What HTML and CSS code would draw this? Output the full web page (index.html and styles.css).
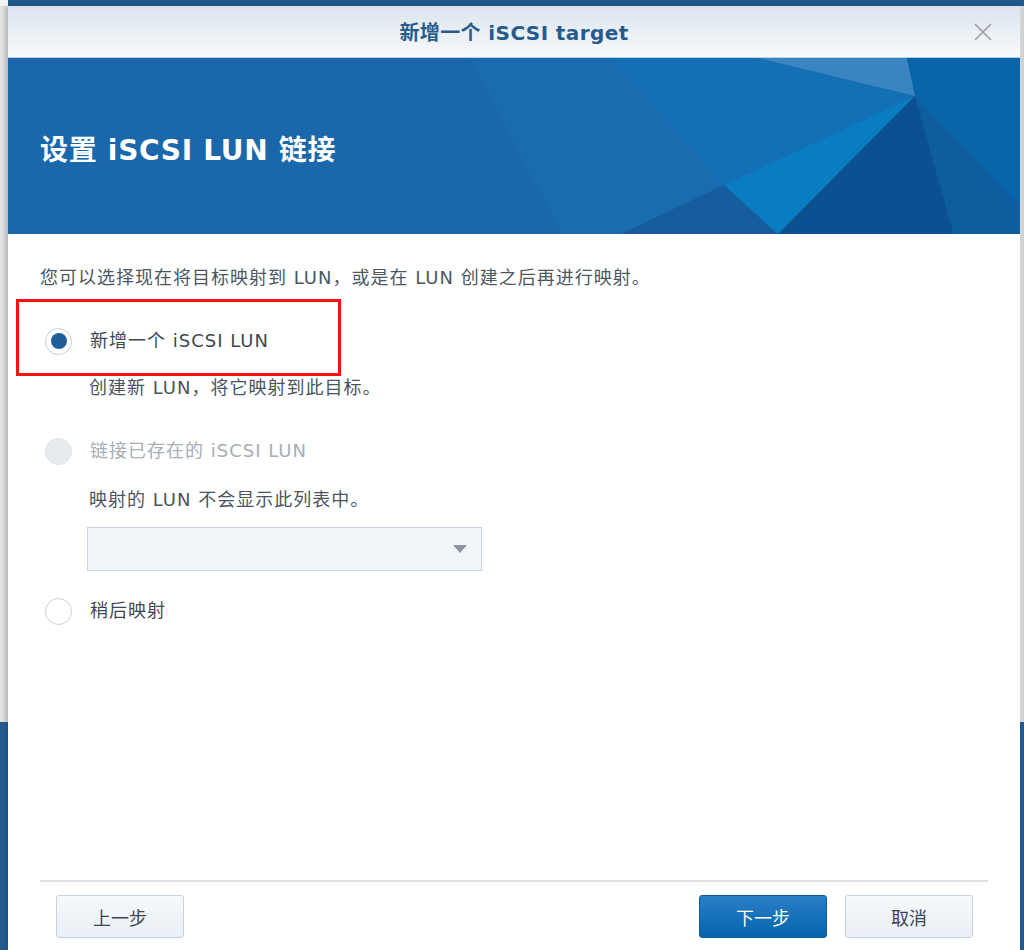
FILE: index.html
```html
<!DOCTYPE html>
<html lang="zh-CN">
<head>
<meta charset="utf-8">
<title>新增一个 iSCSI target</title>
<link rel="stylesheet" href="styles.css">
</head>
<body>
<div class="dialog">
  <header class="titlebar">
    <h1 class="title">新增一个 iSCSI target</h1>
    <button class="close" aria-label="关闭">
      <svg width="18" height="18" viewBox="0 0 18 18"><path d="M1 1L17 17M17 1L1 17" stroke="#9b9b9b" stroke-width="1.6" fill="none"/></svg>
    </button>
  </header>
  <section class="banner">
    <svg class="banner-bg" width="1012" height="176" viewBox="0 0 1012 176" preserveAspectRatio="none">
      <rect width="1012" height="176" fill="#1a68ab"/>
      <polygon points="462,0 605,0 716,127 613,176 554,176" fill="#1a6cb0"/>
      <polygon points="605,0 750,0 907,38 716,127" fill="#1370b5"/>
      <polygon points="750,0 899,0 907,38" fill="#3a84bf"/>
      <polygon points="899,0 1012,0 1012,148 907,38" fill="#0865a9"/>
      <polygon points="716,127 613,176 770,176" fill="#175d9d"/>
      <polygon points="907,38 716,127 770,176" fill="#0a7cc1"/>
      <polygon points="907,38 770,176 946,176" fill="#0b5192"/>
      <polygon points="907,38 946,176 1012,176 1012,148" fill="#0e5d9e"/>
    </svg>
    <h2 class="banner-title">设置 iSCSI LUN 链接</h2>
  </section>
  <main class="content">
    <p class="intro">您可以选择现在将目标映射到 LUN，或是在 LUN 创建之后再进行映射。</p>
    <div class="option option-first">
      <span class="radio checked"></span>
      <span class="label">新增一个 iSCSI LUN</span>
      <span class="highlight"></span>
    </div>
    <p class="desc desc-first">创建新 LUN，将它映射到此目标。</p>
    <div class="option option-second">
      <span class="radio disabled"></span>
      <span class="label label-disabled">链接已存在的 iSCSI LUN</span>
    </div>
    <p class="desc desc-second">映射的 LUN 不会显示此列表中。</p>
    <div class="select">
      <span class="arrow"></span>
    </div>
    <div class="option option-third">
      <span class="radio"></span>
      <span class="label">稍后映射</span>
    </div>
  </main>
  <footer class="footer">
    <div class="separator"></div>
    <div class="buttons">
      <button class="btn">上一步</button>
      <div class="right-buttons">
        <button class="btn btn-primary">下一步</button>
        <button class="btn">取消</button>
      </div>
    </div>
  </footer>
</div>
</body>
</html>
```
FILE: styles.css
```css
html, body {
  margin: 0;
  padding: 0;
  height: 950px;
  overflow: hidden;
}
body {
  background:
    linear-gradient(to bottom, #21588c 0, #21588c 6px, transparent 6px) 8px 0 / 100% 100% no-repeat,
    linear-gradient(to bottom, #f2f2f2 0, #f2f2f2 6px, transparent 6px) 0 0 / 100% 100% no-repeat,
    linear-gradient(to bottom, transparent 0, transparent 722px, #245b8f 722px) 0 0 / 100% 100% no-repeat,
    linear-gradient(to right, #e6e6e6 0, #cfcfcf 8px, #d9d9d9 1020px, #cfcfcf 1024px);
  font-family: "DejaVu Sans", "Noto Sans CJK SC", sans-serif;
}
.dialog {
  position: relative;
  margin: 6px 0 0 8px;
  width: 1012px;
  height: 944px;
  background: #ffffff;
  display: flex;
  flex-direction: column;
  box-shadow: -2px 0 4px rgba(0,0,0,0.12);
}
.titlebar {
  height: 52px;
  flex: none;
  box-sizing: border-box;
  border-bottom: 1px solid #b8cee2;
  background: linear-gradient(to bottom, #dbe4ee, #f8fafc);
  display: flex;
  align-items: center;
  justify-content: center;
  position: relative;
}
.title {
  margin: 0;
  font-size: 20px;
  font-weight: bold;
  color: #275b8d;
  letter-spacing: 0.4px;
}
.close {
  position: absolute;
  right: 28px;
  top: 17px;
  width: 18px;
  height: 18px;
  padding: 0;
  border: 0;
  background: none;
  display: flex;
}
.banner {
  height: 176px;
  flex: none;
  position: relative;
  display: flex;
  align-items: center;
  overflow: hidden;
}
.banner-bg {
  position: absolute;
  left: 0;
  top: 0;
}
.banner-title {
  position: relative;
  margin: 4px 0 0 32px;
  font-size: 28px;
  font-weight: bold;
  color: #ffffff;
  letter-spacing: 0.7px;
}
.content {
  flex: 1;
  padding: 32px 32px 0;
  font-size: 18px;
  color: #47525d;
  letter-spacing: 1px;
}
.intro {
  margin: 0;
  line-height: 24px;
  color: #4d5762;
}
.option {
  position: relative;
  display: flex;
  align-items: center;
  height: 28px;
  gap: 18px;
}
.option-first { margin-top: 37px; }
.option-second { margin-top: 37px; }
.option-third { margin-top: 26px; }
.radio {
  box-sizing: border-box;
  margin-left: 5px;
  width: 27px;
  height: 27px;
  border-radius: 50%;
  border: 1.5px solid #c7d0d9;
  background: #ffffff;
  display: flex;
  align-items: center;
  justify-content: center;
  flex: none;
}
.radio.checked::after {
  content: "";
  width: 16px;
  height: 16px;
  border-radius: 50%;
  background: #1f5e9b;
}
.radio.disabled {
  background: #e6ebf0;
  border-color: #dde3e9;
}
.label {
  line-height: 24px;
  color: #3e4852;
}
.label-disabled {
  color: #a6aeb6;
}
.highlight {
  position: absolute;
  left: -24px;
  top: -28px;
  width: 325px;
  height: 77px;
  box-sizing: border-box;
  border: 3px solid #ff1010;
}
.desc {
  margin: 0;
  padding-left: 49px;
  line-height: 24px;
  color: #4a5560;
}
.desc-first { margin-top: 21px; }
.desc-second { margin-top: 23px; }
.select {
  margin: 15px 0 0 47px;
  width: 395px;
  height: 44px;
  box-sizing: border-box;
  border: 1px solid #c9d4de;
  background: #f3f6f9;
  display: flex;
  align-items: center;
  justify-content: flex-end;
  padding-right: 14px;
}
.arrow {
  width: 0;
  height: 0;
  border-left: 7px solid transparent;
  border-right: 7px solid transparent;
  border-top: 8px solid #8a96a2;
}
.footer {
  flex: none;
}
.separator {
  margin: 0 32px;
  height: 2px;
  background: #e3e3e3;
}
.buttons {
  display: flex;
  justify-content: space-between;
  padding: 13px 47px 12px 48px;
}
.right-buttons {
  display: flex;
  gap: 18px;
}
.btn {
  width: 128px;
  height: 43px;
  box-sizing: border-box;
  border: 1px solid #c6d3df;
  border-radius: 3px;
  background: linear-gradient(to bottom, #f7f9fb, #e9eff5);
  font-family: "Noto Sans CJK SC", sans-serif;
  font-size: 18px;
  color: #3c4650;
  padding: 0;
}
.btn-primary {
  border-color: #0c5d9e;
  background: linear-gradient(to bottom, #2a80c7, #0563ab);
  color: #ffffff;
}
```
